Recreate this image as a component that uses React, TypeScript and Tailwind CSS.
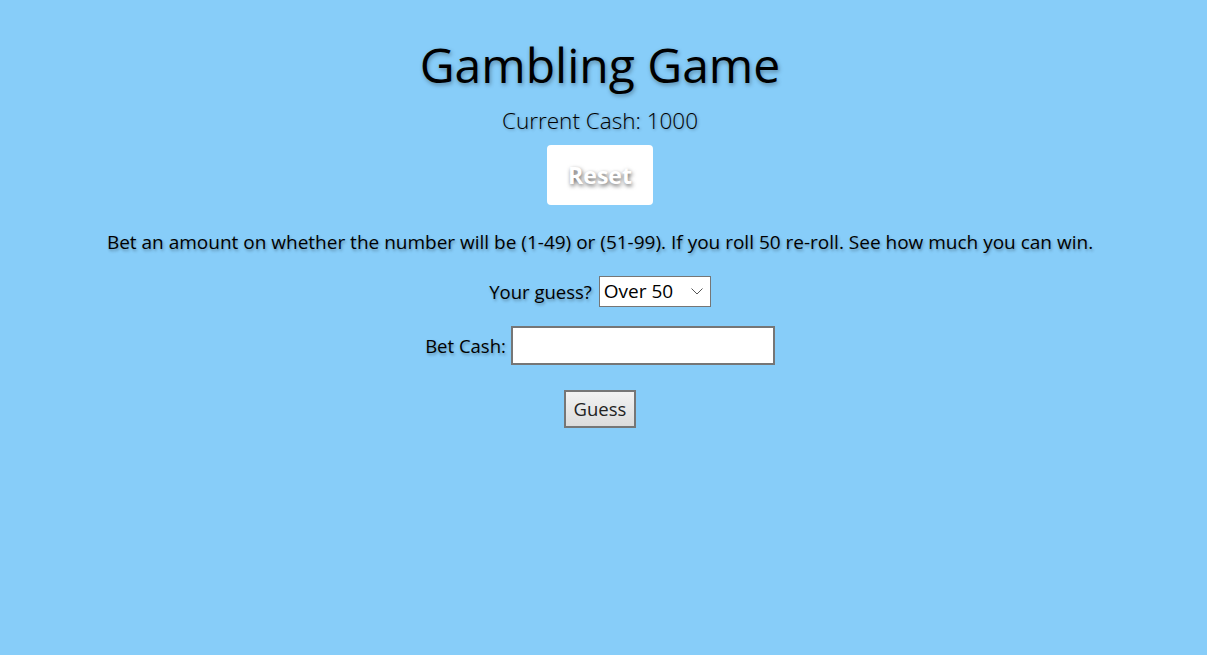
import React, { useState } from "react";

const App: React.FC = () => {
  const [cash, setCash] = useState(1000);
  const [guess, setGuess] = useState("over");
  const [bet, setBet] = useState("");

  return (
    <div
      className="min-h-screen w-full bg-[#87cdf9] text-black flex flex-col items-center pr-[7px]"
      style={{ fontFamily: '"Open Sans", "Noto Sans", sans-serif' }}
    >
      <h1 className="mt-[33px] text-[48px] leading-[64px] [text-shadow:1px_2px_4px_rgba(0,0,0,0.35)]">
        Gambling Game
      </h1>
      <p className="mt-[8px] text-[22.5px] leading-[32px] font-light [text-shadow:1px_1px_3px_rgba(0,0,0,0.3)]">
        Current Cash: {cash}
      </p>
      <button
        onClick={() => setCash(1000)}
        className="mt-[8px] w-[106px] h-[60px] bg-white rounded-[4px] text-white font-bold text-[23px] [text-shadow:1px_2px_4px_rgba(0,0,0,0.6)]"
      >
        Reset
      </button>
      <p className="mt-[24px] text-[19px] leading-[26px] [text-shadow:1px_2px_3px_rgba(0,0,0,0.3)]">
        Bet an amount on whether the number will be (1-49) or (51-99). If you
        roll 50 re-roll. See how much you can win.
      </p>
      <div className="mt-[21px] flex items-center gap-[7px]">
        <span className="text-[18.5px] [text-shadow:1px_2px_3px_rgba(0,0,0,0.3)]">
          Your guess?
        </span>
        <div className="relative">
          <select
            value={guess}
            onChange={(e) => setGuess(e.target.value)}
            className="appearance-none w-[112px] h-[31px] bg-white border border-[#767676] pl-[4px] text-[19px] outline-none"
          >
            <option value="over">Over 50</option>
            <option value="under">Under 50</option>
          </select>
          <svg
            className="absolute right-[8px] top-[12px] pointer-events-none"
            width="12"
            height="7"
            viewBox="0 0 12 7"
            fill="none"
          >
            <path d="M0.5 0.5L6 6L11.5 0.5" stroke="#555" strokeWidth="1" />
          </svg>
        </div>
      </div>
      <div className="mt-[19px] flex items-center gap-[5px]">
        <span className="text-[18.5px] [text-shadow:1px_2px_3px_rgba(0,0,0,0.3)]">
          Bet Cash:
        </span>
        <input
          value={bet}
          onChange={(e) => setBet(e.target.value)}
          className="w-[264px] h-[39px] bg-white border-2 border-[#767676] px-[4px] text-[18px] outline-none"
        />
      </div>
      <button className="mt-[25px] w-[72px] h-[38px] border-2 border-[#767676] bg-gradient-to-b from-[#f2f2f2] to-[#dcdcdc] text-[18.5px] text-[#222]">
        Guess
      </button>
    </div>
  );
};

export default App;
